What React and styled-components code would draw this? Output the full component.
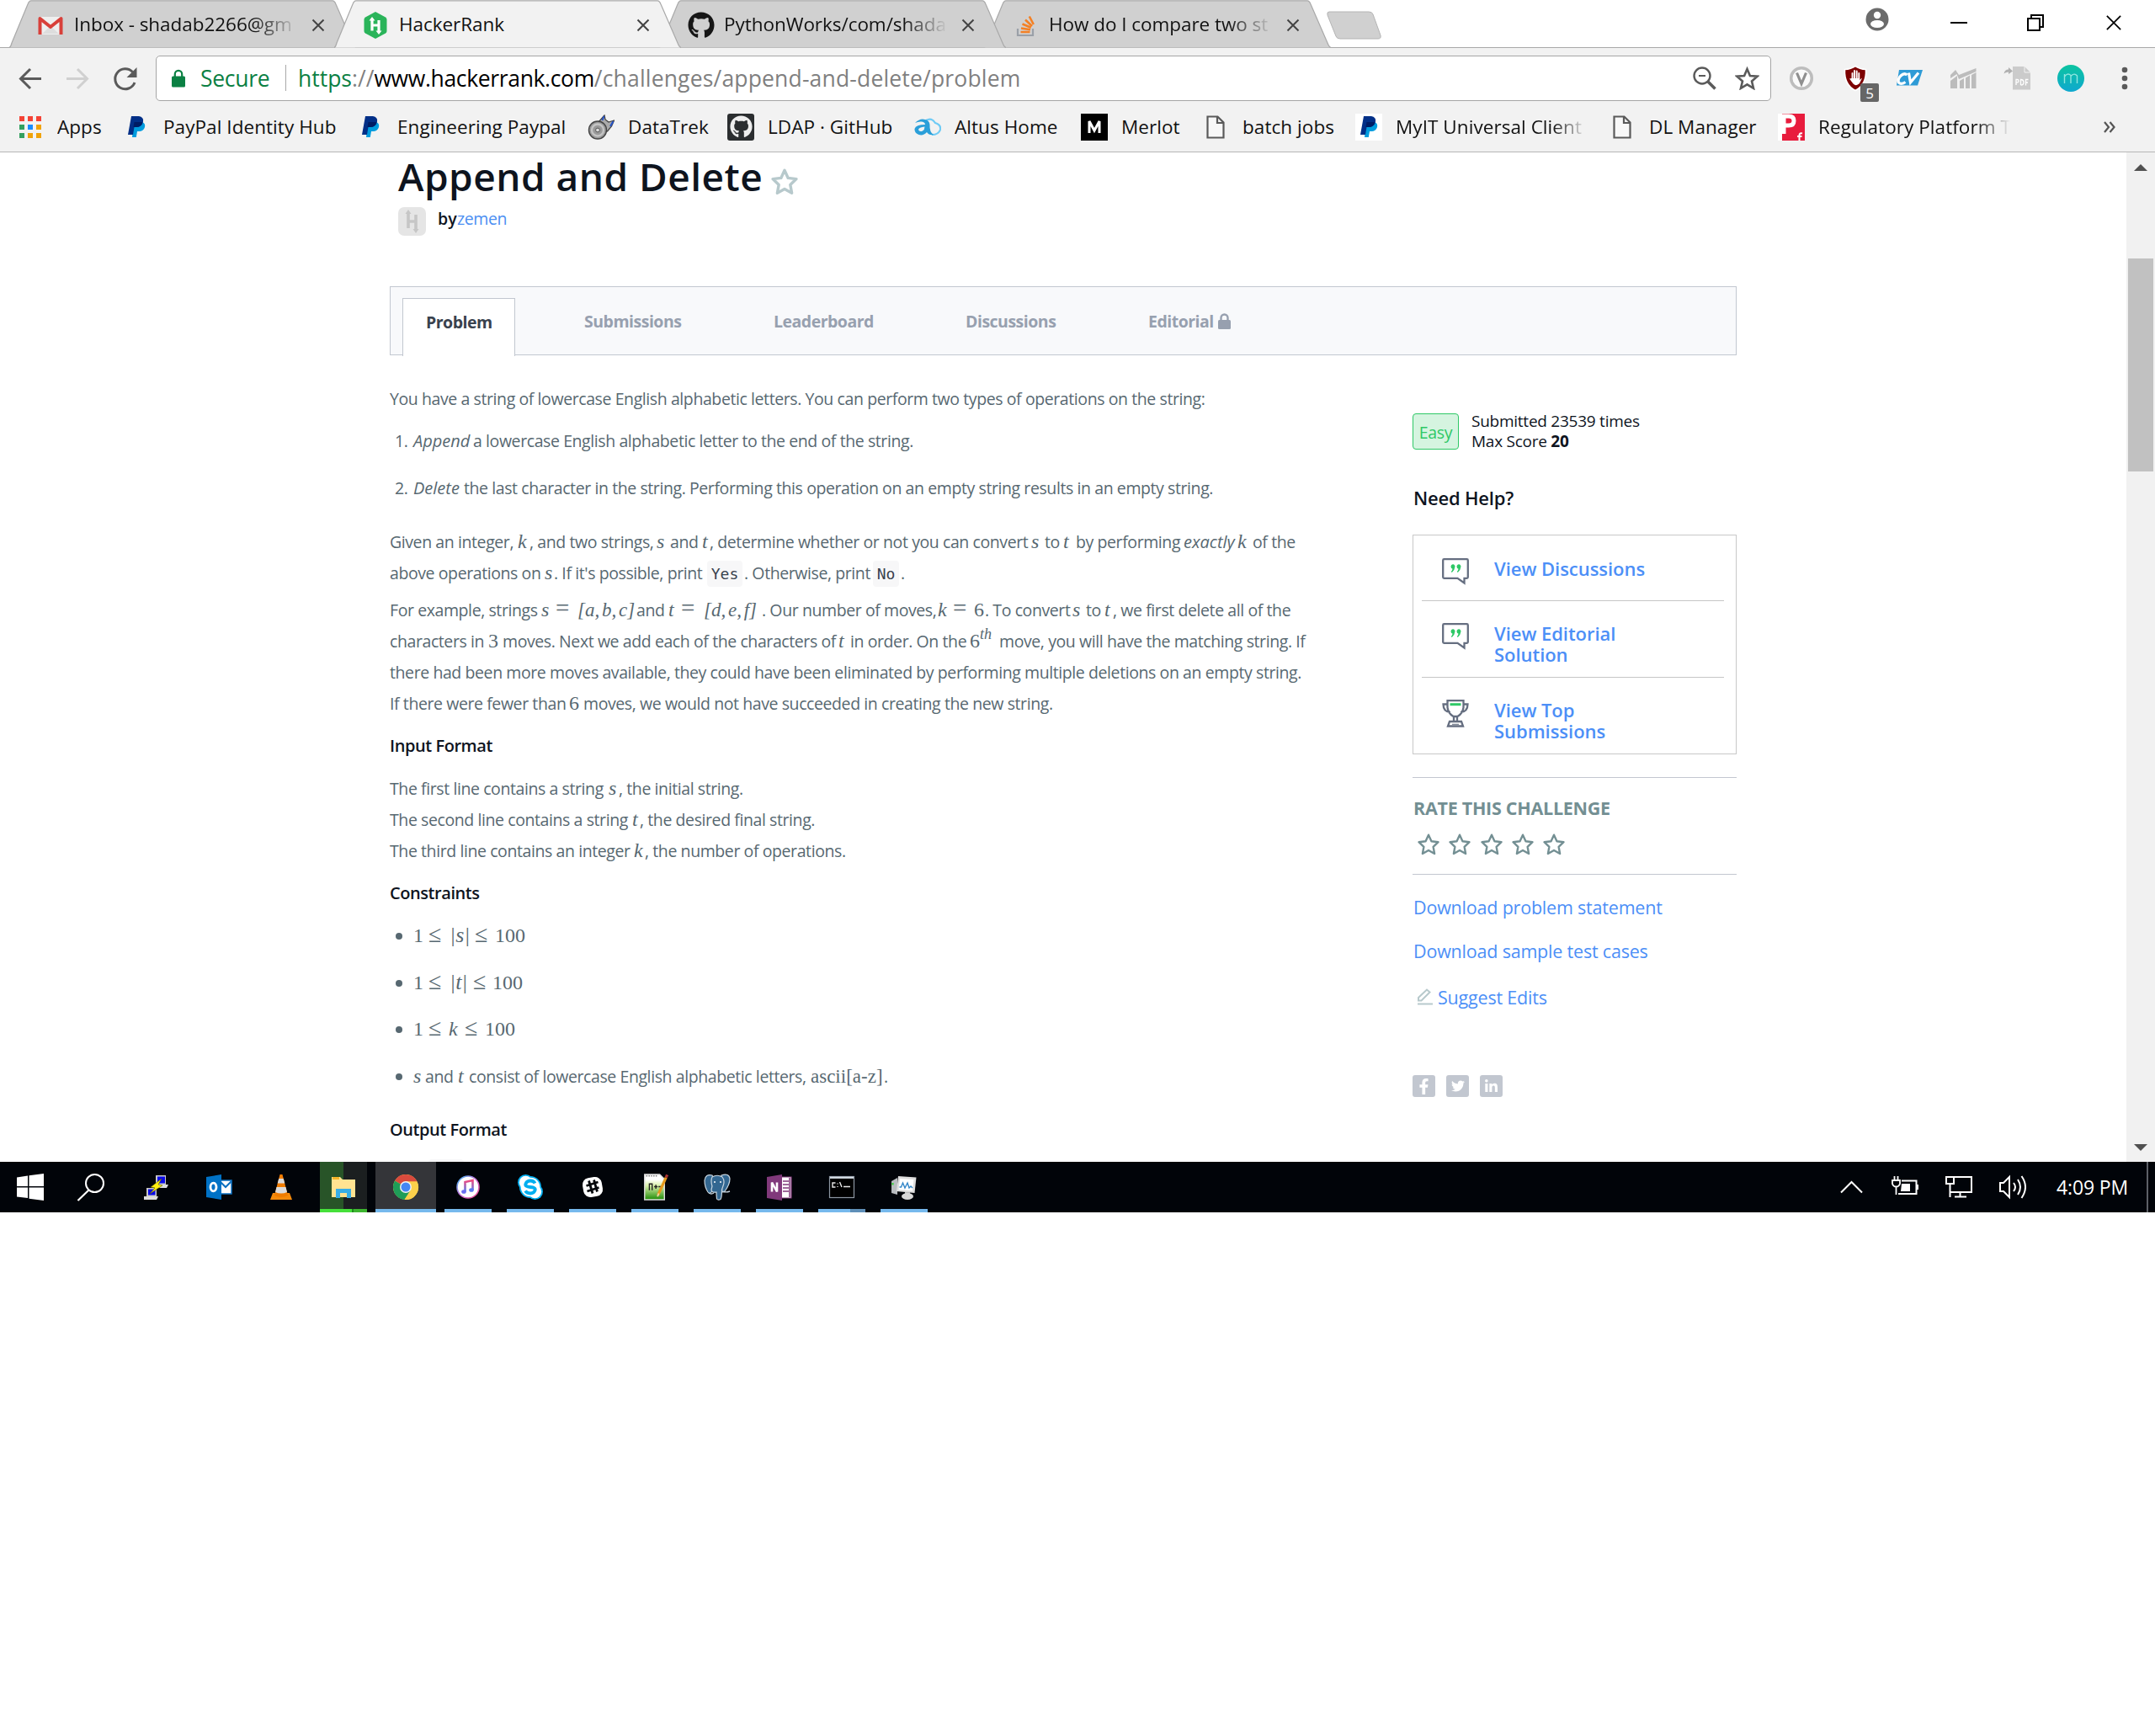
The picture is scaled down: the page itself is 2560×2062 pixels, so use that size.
import React from "react";
import styled, { createGlobalStyle, css } from "styled-components";
import { FaGithub, FaFacebookF, FaTwitter, FaLinkedinIn } from "react-icons/fa";

const GlobalStyle = createGlobalStyle`
  * { box-sizing: border-box; }
  body { margin: 0; background: #fff; font-family: "Open Sans", "Noto Sans", sans-serif; }
  svg { display: block; flex: none; }
`;

const Screen = styled.div`
  width: 2560px;
  height: 2062px;
  overflow: hidden;
  background: #fff;
`;

/* ---------- window and tab strip ---------- */

const TabStrip = styled.header`
  display: flex;
  height: 57px;
  padding-left: 11px;
  background: #fff;
  border-bottom: 1px solid #a9a9a9;
`;

const TabBox = styled.div`
  position: relative;
  z-index: ${(p) => p.$z};
  display: flex;
  align-items: center;
  width: 412px;
  height: 57px;
  margin-right: -26px;
  padding: 2px 0 0 34px;
  flex: none;
`;

const TabShape = styled.svg`
  position: absolute;
  left: 0;
  top: 0;
  z-index: -1;
`;

const TabIcon = styled.div`
  display: flex;
  width: 43px;
  padding-left: ${(p) => p.$pl || 0}px;
`;

const TabTitle = styled.div`
  width: 266px;
  height: 34px;
  line-height: 31px;
  font-size: 22.5px;
  letter-spacing: -0.05px;
  color: #111;
  white-space: nowrap;
  overflow: hidden;
  ${(p) => p.$fade && css`mask-image: linear-gradient(90deg, #000 80%, transparent 100%);`}
`;

const CloseSlot = styled.div`
  margin-left: 16px;
`;

const NewTab = styled.svg`
  margin: 13px 0 0 20px;
`;

const WindowButtons = styled.div`
  display: flex;
  align-items: flex-start;
  margin-left: auto;
  padding: 8px 39px 0 0;
`;

const WinSlot = styled.div`
  margin-left: ${(p) => p.$gap}px;
  padding-top: ${(p) => p.$top}px;
`;

/* ---------- toolbar ---------- */

const Toolbar = styled.div`
  display: flex;
  align-items: center;
  height: 71px;
  padding-left: 20px;
  background: #f2f2f2;
`;

const NavButton = styled.div`
  width: 32px;
  margin-right: 24px;
`;

const Omnibox = styled.div`
  display: flex;
  align-items: center;
  flex: none;
  width: 1919px;
  height: 54px;
  margin-left: -3px;
  padding: 0 13px 0 17px;
  background: #fff;
  border: 1px solid #a6a6a6;
  border-radius: 5px;
  font-size: 26.5px;
  white-space: pre;
`;

const Secure = styled.span`
  width: 84px;
  margin-left: 17px;
  letter-spacing: -0.3px;
  color: #0b8043;
`;

const OmniDivider = styled.span`
  width: 1px;
  height: 31px;
  margin: 0 14px 0 17px;
  background: #a8a8a8;
`;

const UrlPart = styled.span`
  color: ${(p) => p.$c};
  letter-spacing: ${(p) => p.$ls || 0}px;
`;

const OmniActions = styled.div`
  display: flex;
  gap: 22px;
  margin-left: auto;
`;

const Extensions = styled.div`
  display: flex;
  align-items: center;
  flex: none;
  gap: 32px;
  margin-left: 20px;
`;

const ExtSlot = styled.div`
  position: relative;
  width: 32px;
  height: 34px;
`;

const ExtBadge = styled.div`
  position: absolute;
  left: 22px;
  top: 23px;
  width: 22px;
  height: 22px;
  border-radius: 2px;
  background: #666;
  color: #fff;
  font-size: 17px;
  line-height: 24px;
  text-align: center;
`;

const MenuSlot = styled.div`
  margin-left: 38px;
`;

/* ---------- bookmarks ---------- */

const Bookmarks = styled.nav`
  display: flex;
  align-items: center;
  height: 53px;
  padding: 0 0 7px 20px;
  background: #f2f2f2;
  border-bottom: 1px solid #b6b6b6;
`;

const Bookmark = styled.div`
  display: flex;
  align-items: center;
  width: ${(p) => p.$w}px;
  flex: none;
`;

const BookmarkIcon = styled.div`
  display: flex;
  align-items: center;
  justify-content: center;
  flex: none;
  width: 32px;
  height: 32px;
  margin-right: 16px;
  border-radius: ${(p) => p.$r || 0}px;
  background: ${(p) => p.$bg || "transparent"};
`;

const BookmarkText = styled.div`
  width: ${(p) => (p.$fade ? p.$fade + "px" : "auto")};
  overflow: hidden;
  white-space: nowrap;
  font-size: 22.5px;
  line-height: 34px;
  letter-spacing: 0.06px;
  color: #111;
  ${(p) => p.$fade && css`mask-image: linear-gradient(90deg, #000 82%, transparent 100%);`}
`;

/* ---------- page ---------- */

const Viewport = styled.div`
  display: flex;
  height: 1199px;
  overflow: hidden;
`;

const Page = styled.main`
  width: 2526px;
  flex: none;
  padding: 0 463px;
`;

const TitleRow = styled.div`
  display: flex;
  align-items: flex-start;
  height: 65px;
  padding-left: 10px;
`;

const Title = styled.h1`
  width: 442px;
  margin: 0;
  font-size: 46px;
  font-weight: 600;
  line-height: 57px;
  letter-spacing: 0.5px;
  white-space: nowrap;
  color: #0e141e;
`;

const TitleStar = styled.div`
  padding-top: 18px;
`;

const Byline = styled.div`
  display: flex;
  align-items: center;
  height: 34px;
  padding-left: 10px;
  font-size: 19.5px;
  line-height: 30px;
  color: #0e141e;
`;

const Avatar = styled.div`
  width: 33px;
  height: 34px;
  margin-right: 14px;
  border-radius: 7px;
  background: #e5e5e5;
`;

const By = styled.span`
  width: 23px;
  margin-top: -6px;
  font-weight: 600;
`;

const Author = styled.a`
  margin-top: -6px;
  letter-spacing: -0.4px;
  color: #4c8ff2;
`;

const TabBar = styled.div`
  display: flex;
  width: 1600px;
  height: 82px;
  margin-top: 60px;
  padding: 13px 0 0 14px;
  border: 1px solid #c2c7d0;
  background: #f8f9fb;
`;

const PageTab = styled.div`
  display: flex;
  align-items: center;
  gap: 4px;
  width: ${(p) => p.$w}px;
  height: 68px;
  padding: 0 0 13px ${(p) => p.$pl || 0}px;
  font-size: 19.5px;
  font-weight: 700;
  letter-spacing: -0.5px;
  color: #97a0af;
  ${(p) => p.$active && css`
    height: 69px;
    color: #39424e;
    background: #fff;
    border: 1px solid #c2c7d0;
    border-bottom: 0;
  `}
`;

const Columns = styled.div`
  display: flex;
`;

const Body = styled.article`
  width: 1215px;
  flex: none;
  padding-top: 33px;
  font-size: 19.5px;
  line-height: 37px;
  letter-spacing: -0.41px;
  color: #576871;
`;

const Line = styled.div`
  height: 37px;
  margin-top: ${(p) => p.$mt || 0}px;
  padding-left: ${(p) => p.$pl || 0}px;
  white-space: nowrap;
`;

const Run = styled.span`
  display: inline-block;
  width: ${(p) => p.$w}px;
  white-space: pre;
  ${(p) => p.$it && css`
    font-size: 20px;
    font-style: italic;
    letter-spacing: 0;
  `}
`;

const Formula = styled.span`
  display: inline-block;
  width: ${(p) => p.$w}px;
  white-space: pre;
  font-family: "Liberation Serif", serif;
  font-style: ${(p) => (p.$up ? "normal" : "italic")};
  font-size: ${(p) => p.$s || 24}px;
  line-height: 1;
  letter-spacing: 0;
  word-spacing: ${(p) => p.$ws || 0}px;
  ${(p) => p.$sup && css`transform: translateY(-10px);`}
`;

const Code = styled.code`
  display: inline-block;
  width: ${(p) => p.$w}px;
  height: 31px;
  margin-right: 2px;
  line-height: 31px;
  border-radius: 4px;
  background: #f7f7f8;
  font-family: "DejaVu Sans Mono", monospace;
  font-size: 18px;
  letter-spacing: 0;
  text-align: center;
  color: #39424e;
`;

const ClippedCode = styled.div`
  width: 42px;
  height: 31px;
  margin: 17px 0 0 46px;
  border-radius: 4px;
  background: #f7f7f8;
`;

const Head = styled.div`
  height: 37px;
  margin-top: ${(p) => p.$mt || 13}px;
  font-size: 20px;
  font-weight: 600;
  letter-spacing: -0.44px;
  color: #0e141e;
`;

const Num = styled.span`
  display: inline-block;
  width: 22px;
`;

const Item = styled.div`
  display: flex;
  align-items: center;
  height: 37px;
  margin-top: ${(p) => p.$mt}px;
  padding-left: 7px;
  white-space: nowrap;
`;

const ItemText = styled.div`
  height: 37px;
`;

const Dot = styled.span`
  width: 8px;
  height: 8px;
  margin-right: 13px;
  border-radius: 50%;
  background: #576871;
`;

/* ---------- sidebar ---------- */

const Aside = styled.aside`
  width: 385px;
  flex: none;
  padding-top: 69px;
  color: #0e141e;
`;

const Stats = styled.div`
  display: flex;
  height: 44px;
`;

const Easy = styled.div`
  width: 55px;
  height: 43px;
  margin-right: 15px;
  border: 1px solid #2ec866;
  border-radius: 4px;
  background: #d5f4e0;
  color: #2ec866;
  font-size: 19.5px;
  line-height: 43px;
  letter-spacing: -0.3px;
  text-align: center;
`;

const StatText = styled.div`
  margin-top: -3px;
  font-size: 19px;
  line-height: 24px;
  letter-spacing: -0.25px;
  white-space: nowrap;
`;

const Need = styled.h2`
  height: 30px;
  margin: 41px 0 29px 1px;
  font-size: 22px;
  font-weight: 600;
  line-height: 30px;
  letter-spacing: -0.2px;
`;

const HelpBox = styled.div`
  width: 385px;
  height: 261px;
  border: 1px solid #c8c8c8;
  padding: 0 14px 0 10px;
`;

const HelpRow = styled.div`
  display: flex;
  height: ${(p) => p.$h}px;
  padding: ${(p) => p.$pt}px 0 0 24px;
  ${(p) => !p.$last && css`border-bottom: 1px solid #c6c6c6;`}
`;

const HelpText = styled.a`
  width: 200px;
  margin: 0 0 0 30px;
  font-size: 22px;
  font-weight: 600;
  line-height: 25px;
  letter-spacing: -0.04px;
  color: #4c8ff7;
`;

const Rate = styled.section`
  width: 385px;
  height: 116px;
  margin-top: 27px;
  padding-top: 21px;
  border-top: 1px solid #c3c6d0;
  border-bottom: 1px solid #c3c6d0;
`;

const RateTitle = styled.div`
  padding-left: 1px;
  font-size: 21.5px;
  font-weight: 700;
  line-height: 30px;
  letter-spacing: -0.27px;
  color: #738f93;
`;

const RateStars = styled.div`
  display: flex;
  gap: 9.3px;
  padding: 14px 0 0 5px;
`;

const SideLink = styled.a`
  display: flex;
  align-items: center;
  height: 30px;
  margin-top: ${(p) => p.$mt}px;
  padding-left: ${(p) => p.$pl || 1}px;
  font-size: 21.5px;
  letter-spacing: -0.2px;
  white-space: nowrap;
  color: #4c8ff7;
`;

const Social = styled.div`
  display: flex;
  gap: 13px;
  margin-top: 78px;
`;

const SocialBox = styled.div`
  display: flex;
  align-items: center;
  justify-content: center;
  width: 27px;
  height: 26px;
  border-radius: 3px;
  background: #c2c7d0;
`;

const Scrollbar = styled.div`
  display: flex;
  flex-direction: column;
  align-items: center;
  width: 34px;
  height: 1199px;
  background: #f1f1f1;
`;

const Thumb = styled.div`
  width: 30px;
  height: 253px;
  margin: 104px 0 799px;
  background: #c1c1c1;
`;

/* ---------- taskbar ---------- */

const Taskbar = styled.footer`
  display: flex;
  height: 60px;
  background: #010409;
`;

const StartSlot = styled.div`
  display: flex;
  align-items: center;
  justify-content: center;
  width: 72px;
  margin-right: ${(p) => p.$mr || 0}px;
`;

const TaskSlot = styled.div`
  display: flex;
  flex-direction: column;
  align-items: center;
  width: ${(p) => (p.$wide ? 72 : 56)}px;
  margin: ${(p) => (p.$wide ? "0 1px" : "0 9px")};
  padding-top: 14px;
  background: ${(p) => p.$bg || "transparent"};
`;

const TaskBarLine = styled.div`
  width: 100%;
  height: 4px;
  margin-top: 10px;
  background: ${(p) => p.$c};
`;

const Tray = styled.div`
  display: flex;
  align-items: center;
  margin-left: auto;
  color: #fff;
`;

const TrayIcon = styled.div`
  width: ${(p) => p.$w || 64}px;
`;

const Clock = styled.div`
  width: 107px;
  font-size: 23px;
  letter-spacing: -0.14px;
  white-space: nowrap;
`;

const Desk = styled.div`
  width: 10px;
  height: 60px;
  border-left: 2px solid #5d6066;
`;

/* ---------- icons ---------- */

const CloseX = ({ s = 16, w = 2, c = "#444" }) => (
  <svg width={s} height={s} viewBox="0 0 16 16">
    <path d="M1.5 1.5l13 13M14.5 1.5l-13 13" stroke={c} strokeWidth={w} />
  </svg>
);

const Gmail = () => (
  <svg width="30" height="22" viewBox="0 0 30 22">
    <rect x="2" y="1" width="26" height="21" rx="1.5" fill="#efefef" />
    <path d="M5 21L15 12l10 9z" fill="#ddd" />
    <path d="M2.5 22V3L15 13 27.500 3v19" fill="none" stroke="#d8403a" strokeWidth="4" strokeLinejoin="round" />
  </svg>
);

const HackerHex = () => (
  <svg width="30" height="34" viewBox="0 0 30 34">
    <path d="M15 1l12 6.500q1.500 1 1.500 2.500v14q0 1.500-1.500 2.500L15 33 3 26.500Q1.500 25.500 1.500 24V10Q1.500 8.500 3 7.500z" fill="#2ab45a" />
    <path d="M11 9v14.500M19 11v13M11 17h8" stroke="#fff" strokeWidth="3.200" fill="none" />
    <path d="M7.500 11.500L11 7l3.500 4.500zM15.500 23.500L19 28l3.500-4.500z" fill="#fff" />
  </svg>
);

const StackIcon = () => (
  <svg width="24" height="26" viewBox="0 0 24 26">
    <path d="M2 17v8h18v-8" fill="none" stroke="#9aa0a8" strokeWidth="2.200" />
    <path d="M5.500 21h11M6 16.500l11 1.800M7.500 11.500l10.300 4.200M11 6.500l8 7.500M15.800 2.500l5 9.500" stroke="#f48024" strokeWidth="2.600" />
  </svg>
);

const PaypalIcon = () => (
  <svg width="21" height="25" viewBox="0 0 21 25">
    <path d="M7 7h10q4 1.500 3 6-1.500 5-7 5h-2l-1.200 7H5z" fill="#009cde" />
    <path d="M4 0h9q6 1 5 6.500Q17 13 10 13H7.500L6 22H0z" fill="#012f87" />
    <path d="M7.500 7h9.800Q16 13 10 13H6.500z" fill="#001c64" />
  </svg>
);

const FileIcon = () => (
  <svg width="22" height="28" viewBox="0 0 22 28">
    <path d="M1.500 1.500h12l7 7v18h-19zM13 2v7h7" fill="#f8f8f8" stroke="#5a5a5a" strokeWidth="2.200" />
  </svg>
);

const MerlotIcon = () => (
  <svg width="32" height="32" viewBox="0 0 32 32">
    <path d="M10 23V9l6 11 6-11v14" fill="none" stroke="#fff" strokeWidth="3" />
  </svg>
);

const PlatformIcon = () => (
  <svg width="32" height="32" viewBox="0 0 32 32">
    <path d="M0 0h32v32H0z" fill="#e81c3d" />
    <path d="M0 0h5v32H0z" fill="#fff" />
    <path d="M7 24V3h6q6 0 6 5.500T13 14H8" fill="none" stroke="#fff" strokeWidth="5" />
    <path d="M29 23.500q-3.500-1-3.500 2.500v6M23 27h5.500" fill="none" stroke="#fff" strokeWidth="2" />
  </svg>
);

const StarOutline = ({ s, c, w = 2.4 }) => (
  <svg width={s} height={s} viewBox="0 0 26 26">
    <path d="M13 2.500l3.200 7 7.500.9-5.500 5.200 1.400 7.600L13 19.500l-6.600 3.700 1.400-7.600L2.300 10.400l7.500-.9z" fill="none" stroke={c} strokeWidth={w} strokeLinejoin="round" />
  </svg>
);

const Discuss = () => (
  <svg width="32" height="32" viewBox="0 0 32 32">
    <path d="M2.500 1.200h27q1.300 0 1.300 1.300v20q0 1.300-1.300 1.300H26.500v5.700L18.500 23.800H2.500q-1.300 0-1.300-1.300v-20q0-1.300 1.300-1.300z" fill="none" stroke="#656e80" strokeWidth="2.300" />
    <path d="M10.500 10a2.500 2.500 0 1 1 4.800.8q-.4 4-3.500 6.200l-1-1q1.500-1.500 1.700-3.200-2-.6-2-2.800zM17.500 10a2.500 2.500 0 1 1 4.800.8q-.4 4-3.500 6.200l-1-1q1.500-1.500 1.700-3.200-2-.6-2-2.800z" fill="#2ec866" />
  </svg>
);

const Trophy = () => (
  <svg width="32" height="33" viewBox="0 0 32 33">
    <path d="M6.500 1.200h19v8.300q-1 7-7 10.500h-5q-6-3.500-7-10.500zM6.500 5.500h-5q0 9 8.500 9.500M25.500 5.500h5q0 9-8.500 9.500M14 20v6M18 20v6M9 26h14l2 5.500H7z" fill="none" stroke="#656e80" strokeWidth="2.300" />
    <path d="M9.500 5.700h13" stroke="#2ec866" strokeWidth="3" />
    <path d="M12 29.300h8" stroke="#656e80" strokeWidth="1" />
  </svg>
);

const AppsIcon = () => (
  <svg width="26" height="26" viewBox="0 0 26 26">
    {["#f44336", "#f44336", "#f44336", "#34a060", "#1a8cff", "#f0a30a", "#34a060", "#f0a30a", "#f0a30a"].map((c, i) => (
      <rect key={i} x={(i % 3) * 10} y={Math.floor(i / 3) * 10} width="6" height="6" fill={c} />
    ))}
  </svg>
);

const Viking = () => (
  <svg width="32" height="30" viewBox="0 0 32 30">
    <path d="M13 9L20 1l1 5 4 3 6.500-2-3 7-5 6-6-2z" fill="#aaa" stroke="#444" strokeWidth="1.300" />
    <path d="M19.500 2l-2 5M30.500 8l-3.500 6" stroke="#2452c8" strokeWidth="2" />
    <circle cx="12" cy="18.500" r="10.500" fill="#999" stroke="#444" strokeWidth="1.400" />
    <circle cx="12" cy="18.500" r="7" fill="none" stroke="#c4c4c4" strokeWidth="2.400" />
    <circle cx="12" cy="18.500" r="2.400" fill="#ddd" stroke="#555" />
  </svg>
);

const Cloud = () => (
  <svg width="32" height="22" viewBox="0 0 32 22">
    <path d="M14 3q7-4 11 3 7 2 6 8-2 6-10 6" fill="none" stroke="#6fcbf5" strokeWidth="2.200" />
    <path d="M1 6Q7 0 13 2q5 1 5.500 6-.5 9 4.500 12-5 1-8-3-4 4.500-9.500 3Q0 18 .500 13 2 8 13 8q0-3-4-3.500T1 6z" fill="#2b9fd9" />
    <path d="M12.500 10.500q-7 .5-7.500 3.500 1 3 5 1.500 2.500-1.500 2.500-5z" fill="#f2f2f2" />
  </svg>
);

const Putty = () => (
  <svg width="32" height="32" viewBox="0 0 32 32">
    <path d="M15 2h12v11H15zM4 17h12v10H4z" fill="#c8c8c8" />
    <path d="M17 3.500h9v8h-9zM6 18.500h8.500v7H6z" fill="#0808e8" />
    <path d="M18 13h12l-2 4H17zM1 27h17l-2 4H1z" fill="#ddd" />
    <path d="M22 6L9 16l5 1-6 7 15-10-5-1z" fill="#ffee10" stroke="#555500" strokeWidth=".6" />
  </svg>
);

const Outlook = () => (
  <svg width="32" height="32" viewBox="0 0 32 32">
    <path d="M18 8h13v16H18z" fill="#fff" stroke="#0b6fc0" strokeWidth="1.500" />
    <path d="M18 10l6 6 7-7" fill="none" stroke="#0b6fc0" strokeWidth="2" />
    <path d="M1 4l18-3v30L1 28z" fill="#0072c6" />
    <ellipse cx="9.500" cy="16" rx="3.500" ry="4.800" fill="none" stroke="#fff" strokeWidth="2.800" />
  </svg>
);

const Vlc = () => (
  <svg width="32" height="32" viewBox="0 0 32 32">
    <path d="M6 23h20l3 8H3z" fill="#f58a0b" />
    <path d="M14.500 1h3L24 26q-8 4-16 0z" fill="#f07c00" />
    <path d="M13.200 6h5.600l1.500 5.500h-8.600zM10.500 16h11l1.500 6q-7 3-14 0z" fill="#dcdcdc" />
  </svg>
);

const Explorer = () => (
  <svg width="32" height="32" viewBox="0 0 32 32">
    <path d="M2 4h10l3 3h15v21H2z" fill="#ffe391" />
    <path d="M3 4h8v3H3z" fill="#f5b62a" />
    <path d="M7 29V18h18v11h-5v-6h-8v6z" fill="#38aee6" />
  </svg>
);

const ChromeIcon = () => (
  <svg width="32" height="32" viewBox="0 0 32 32">
    <circle cx="16" cy="16" r="15" fill="#fcd04b" />
    <path d="M16 16L3 8.500A15 15 0 0 1 29.500 9.500H16z" fill="#d94a3d" />
    <path d="M16 16L3 8.500A15 15 0 0 0 14.500 31L22 19.500z" fill="#1f9d58" />
    <path d="M16 9.500h13.500A15 15 0 0 1 14.500 31L22 19.500z" fill="#fcd04b" />
    <circle cx="16" cy="16" r="7" fill="#f2f2f2" />
    <circle cx="16" cy="16" r="5.500" fill="#4587f3" />
  </svg>
);

const Itunes = () => (
  <svg width="32" height="32" viewBox="0 0 32 32">
    <defs>
      <linearGradient id="ring" x1="0" y1="0" x2="1" y2="1"><stop offset="0" stopColor="#35b7f0" /><stop offset=".5" stopColor="#c86dd8" /><stop offset="1" stopColor="#f0508c" /></linearGradient>
      <linearGradient id="note" x1="0" y1="0" x2="0" y2="1"><stop offset="0" stopColor="#f2497f" /><stop offset="1" stopColor="#4f7df0" /></linearGradient>
    </defs>
    <circle cx="16" cy="16" r="13" fill="#fff" stroke="url(#ring)" strokeWidth="1.600" />
    <path d="M12.500 21.500V10l9-2V19.500" fill="none" stroke="url(#note)" strokeWidth="2.600" />
    <ellipse cx="11" cy="21.500" rx="2.800" ry="2.300" fill="#6a6ef0" />
    <ellipse cx="20" cy="19.500" rx="2.800" ry="2.300" fill="#5a78f0" />
  </svg>
);

const Skype = () => (
  <svg width="32" height="32" viewBox="0 0 32 32">
    <circle cx="10.500" cy="10.500" r="9.500" fill="#00aff0" /><circle cx="21.500" cy="21.500" r="9.500" fill="#00aff0" /><circle cx="16" cy="16" r="13" fill="#00aff0" />
    <circle cx="16" cy="16" r="11.300" fill="#fff" /><circle cx="10.500" cy="10.500" r="7.700" fill="#fff" /><circle cx="21.500" cy="21.500" r="7.700" fill="#fff" />
    <path d="M21.500 11.500Q20 8.500 16 8.500T10.500 12t5.500 4 5.500 4-5.500 3.500-6-3" fill="none" stroke="#00aff0" strokeWidth="3.800" />
  </svg>
);

const Slack = () => (
  <svg width="32" height="32" viewBox="0 0 32 32">
    <rect x="4.500" y="4.500" width="23" height="23" rx="8" fill="#fff" transform="rotate(-10 16 16)" />
    <path d="M11.500 8.500l4.500 15M17.500 7.500l4 14M8.500 14.500l14-4.500M9.500 21l14-4.500" stroke="#05080c" strokeWidth="2.800" />
  </svg>
);

const Npp = () => (
  <svg width="32" height="32" viewBox="0 0 32 34">
    <defs><linearGradient id="page" x1="0" y1="0" x2="0" y2="1"><stop offset=".2" stopColor="#fff" /><stop offset=".45" stopColor="#d8f0a8" /><stop offset=".95" stopColor="#2f9414" /></linearGradient></defs>
    <path d="M3 1h19l6 6v26H3z" fill="url(#page)" stroke="#ddd" strokeWidth="1.500" />
    <path d="M5 3h15" stroke="#777" strokeDasharray="1.500 1.500" strokeWidth="1.500" />
    <path d="M9 21v-8h3.500v8M15 16.500h4.500M17.200 14v5M20.500 16.500h4" fill="none" stroke="#222" strokeWidth="1.500" />
    <path d="M30 5L20 27" stroke="#e69a1c" strokeWidth="3.400" />
    <path d="M31.500 1.500L30 5" stroke="#a33" strokeWidth="3.400" />
    <path d="M20.800 25l-1.500 4" stroke="#efd3a0" strokeWidth="2" />
  </svg>
);

const Elephant = () => (
  <svg width="32" height="32" viewBox="0 0 32 32">
    <path d="M10 2Q2 0 1 8q0 8 4 14 2 2.500 4 0l2-3 1-13z" fill="#336791" stroke="#c9d6e0" strokeWidth="1.200" />
    <path d="M21 2q9-3 10 4 0 7-6 15l-3 1-2-15z" fill="#336791" stroke="#c9d6e0" strokeWidth="1.200" />
    <path d="M10 4q6-3.500 12 0 3 4 1.500 9L21.500 19q0 9-1.500 11.500-3 1.500-4.500-.5-.5-5-.5-8-6 1-6-3l1-4q-2-7 0-11z" fill="#336791" stroke="#c9d6e0" strokeWidth="1.200" />
    <path d="M23 21.500q4 1 8-.5M12 23q-3 2-6 0" fill="none" stroke="#c9d6e0" strokeWidth="1.400" />
    <path d="M12 10h2M19 10h2" stroke="#fff" strokeWidth="1.600" />
  </svg>
);

const OneNote = () => (
  <svg width="32" height="32" viewBox="0 0 32 32">
    <path d="M17 4h13v25H17z" fill="#fff" stroke="#80397b" strokeWidth="1.200" />
    <path d="M20 9h7M20 13h7M20 17h7M20 21h7M28 5v23" stroke="#80397b" strokeWidth="1.500" />
    <path d="M1 4l18-3v31L1 29z" fill="#80397b" />
    <path d="M7 21.500v-11l6 11v-11" fill="none" stroke="#fff" strokeWidth="2.600" />
  </svg>
);

const Cmd = () => (
  <svg width="32" height="32" viewBox="0 0 32 32">
    <rect x="1.500" y="3.500" width="29" height="25" fill="#000" stroke="#8d97a2" strokeWidth="1.200" />
    <path d="M2 4.800h28" stroke="#d5dde6" strokeWidth="2.200" />
    <path d="M8.500 11H5v5h3.500M11 11.500v1M11 15v1M13.500 10l2.500 6M18 15.500h8" fill="none" stroke="#e8e8e8" strokeWidth="1.400" />
  </svg>
);

const Monitor = () => (
  <svg width="32" height="32" viewBox="0 0 32 32">
    <path d="M1 9l7-4v20l-7-2z" fill="#b9bdc0" />
    <path d="M9 3l21.500 1.500L28.500 23 7 21z" fill="#dedede" />
    <path d="M11 6l16.500 1-1.500 13.500L9.500 19z" fill="#fff" />
    <path d="M10.500 16h2l2-5 2.500 6 3-6 2 6 2-2 2 2" fill="none" stroke="#3286c8" strokeWidth="1.400" />
    <path d="M17 22h6v4h-6z" fill="#bbb" />
    <ellipse cx="20" cy="27" rx="7" ry="4" fill="#d8d8d8" />
    <path d="M2.500 11v2.500" stroke="#3c3" strokeWidth="2" />
  </svg>
);

const BLUE = "#76b9ed";

const tasks = [
  { icon: <Putty /> },
  { icon: <Outlook /> },
  { icon: <Vlc /> },
  { icon: <Explorer />, line: "linear-gradient(90deg,#45e03a 0 38px,#1f8a1c 38px 40px,#3db52f 40px)", bg: "linear-gradient(90deg,#285428 0 50%,#1b1f20 50%)" },
  { icon: <ChromeIcon />, line: BLUE, bg: "#343539", wide: true },
  { icon: <Itunes />, line: BLUE },
  { icon: <Skype />, line: BLUE },
  { icon: <Slack />, line: BLUE },
  { icon: <Npp />, line: BLUE },
  { icon: <Elephant />, line: BLUE },
  { icon: <OneNote />, line: BLUE },
  { icon: <Cmd />, line: "linear-gradient(90deg,#76b9ed 0 38px,#5f8fb8 38px)" },
  { icon: <Monitor />, line: BLUE },
];

const tabs = [
  { icon: <Gmail />, title: "Inbox - shadab2266@gm", fade: true, z: 1 },
  { icon: <HackerHex />, title: "HackerRank", active: true, z: 5 },
  { icon: <FaGithub size={32} color="#161616" />, title: "PythonWorks/com/shada", fade: true, z: 3 },
  { icon: <StackIcon />, title: "How do I compare two st", fade: true, z: 2, pl: 4 },
];

const bookmarks = [
  { w: 126, icon: <AppsIcon />, text: "Apps" },
  { w: 278, icon: <PaypalIcon />, text: "PayPal Identity Hub" },
  { w: 274, icon: <PaypalIcon />, text: "Engineering Paypal" },
  { w: 166, icon: <Viking />, text: "DataTrek" },
  { w: 222, icon: <FaGithub size={27} color="#eee" />, text: "LDAP · GitHub", bg: "#2b2e30", r: 3 },
  { w: 198, icon: <Cloud />, text: "Altus Home" },
  { w: 144, icon: <MerlotIcon />, text: "Merlot", bg: "#000" },
  { w: 182, icon: <FileIcon />, text: "batch jobs" },
  { w: 301, icon: <PaypalIcon />, text: "MyIT Universal Client", bg: "#fff", fade: 227 },
  { w: 201, icon: <FileIcon />, text: "DL Manager" },
  { w: 387, icon: <PlatformIcon />, text: "Regulatory Platform T", fade: 228 },
];

export default function App() {
  return (
    <Screen>
      <GlobalStyle />
      <TabStrip>
        {tabs.map((t) => (
          <TabBox key={t.title} $z={t.z}>
            <TabShape width="412" height="57" viewBox="0 0 412 57">
              <path d="M0 56.500C1.500 56 2 55 3 51L22 5Q23.500 .8 26 .8H384Q386.500 .8 388 5L408 51C409.500 55 410 56 412 56.500z" fill={t.active ? "#f2f2f2" : "#d0d0d0"} />
              <path d="M0 56.500C1.500 56 2 55 3 51L22 5Q23.500 .8 26 .8H384Q386.500 .8 388 5L408 51C409.500 55 410 56 412 56.500" fill="none" stroke="#a9a9a9" strokeWidth="1.200" />
            </TabShape>
            <TabIcon $pl={t.pl}>{t.icon}</TabIcon>
            <TabTitle $fade={t.fade}>{t.title}</TabTitle>
            <CloseSlot><CloseX /></CloseSlot>
          </TabBox>
        ))}
        <NewTab width="68" height="34" viewBox="0 0 68 34">
          <path d="M4 1h47q4 0 5 3l9 25q1 4-3 4H17q-4 0-5-3L2 5Q1 1 4 1z" fill="#d0d0d0" stroke="#b4b4b4" />
        </NewTab>
        <WindowButtons>
          <WinSlot $gap={0} $top={1}>
            <svg width="28" height="28" viewBox="0 0 28 28">
              <circle cx="14" cy="14" r="13.500" fill="#6b6b6b" /><circle cx="14" cy="9" r="4.200" fill="#fff" /><ellipse cx="14" cy="19.500" rx="8" ry="4.500" fill="#fff" />
            </svg>
          </WinSlot>
          <WinSlot $gap={73} $top={18}><svg width="20" height="2"><rect width="20" height="2" fill="#000" /></svg></WinSlot>
          <WinSlot $gap={71} $top={9}>
            <svg width="20" height="20" viewBox="0 0 20 20"><path d="M1 5h14v14H1zM5 5V1h14v14h-4" fill="none" stroke="#000" strokeWidth="2" /></svg>
          </WinSlot>
          <WinSlot $gap={73} $top={9}><CloseX s={20} w={1.4} c="#000" /></WinSlot>
        </WindowButtons>
      </TabStrip>

      <Toolbar>
        <NavButton><svg width="32" height="32" viewBox="0 0 32 32"><path d="M29 16.500H5M16 5L4.500 16.500 16 28" fill="none" stroke="#5a5a5a" strokeWidth="3" /></svg></NavButton>
        <NavButton><svg width="32" height="32" viewBox="0 0 32 32"><path d="M3 16.500h24M16 5l11.500 11.500L16 28" fill="none" stroke="#d0d0d0" strokeWidth="3" /></svg></NavButton>
        <NavButton><svg width="32" height="32" viewBox="0 0 32 32"><path d="M28 21A12 12 0 1 1 25.500 8.500" fill="none" stroke="#5a5a5a" strokeWidth="3" /><path d="M30.500 3v12h-12z" fill="#5a5a5a" /></svg></NavButton>
        <Omnibox>
          <svg width="18" height="22" viewBox="0 0 18 22"><rect x="1" y="8.500" width="16" height="13" rx="1.500" fill="#0b8043" /><path d="M4.800 9V6a4.200 4.200 0 0 1 8.400 0v3" fill="none" stroke="#0b8043" strokeWidth="2.200" /></svg>
          <Secure>Secure</Secure>
          <OmniDivider />
          <UrlPart $c="#0b8043">https</UrlPart>
          <UrlPart $c="#808080">://</UrlPart>
          <UrlPart $c="#000" $ls={-0.35}>www.hackerrank.com</UrlPart>
          <UrlPart $c="#808080" $ls={0.17}>/challenges/append-and-delete/problem</UrlPart>
          <OmniActions>
            <svg width="28" height="28" viewBox="0 0 28 28"><circle cx="11" cy="11" r="9.500" fill="none" stroke="#5a5a5a" strokeWidth="2.400" /><path d="M18 18l8.500 8.500" stroke="#5a5a5a" strokeWidth="3.600" /><path d="M7 11h8" stroke="#5a5a5a" strokeWidth="2" /></svg>
            <svg width="29" height="28" viewBox="0 0 29 28"><path d="M14.500 3l3.400 8 8.600.7-6.500 5.700 2 8.400-7.500-4.500L7 25.800l2-8.400-6.500-5.700 8.600-.7z" fill="none" stroke="#5a5a5a" strokeWidth="2.600" /></svg>
          </OmniActions>
        </Omnibox>
        <Extensions>
          <ExtSlot><svg width="32" height="34" viewBox="0 0 32 34"><circle cx="16" cy="17" r="12.300" fill="#fafafa" stroke="#bdbdbd" strokeWidth="3.500" /><path d="M10.500 10.500l5.500 13 5.500-13" fill="none" stroke="#8f8f8f" strokeWidth="3.200" /></svg></ExtSlot>
          <ExtSlot>
            <svg width="32" height="34" viewBox="0 0 32 34"><path d="M16 2.500q5 3.500 12.500 4 1 18-12.500 25Q2.500 24.500 3.500 6.500q7.500-.5 12.500-4z" fill="#7d0000" stroke="#fff" strokeWidth="1.600" /><path d="M12.500 18v-7M15 17V8M17.700 17V8.500M20.300 18v-7" stroke="#fff" strokeWidth="1.900" strokeLinecap="round" /><path d="M11.500 17h9.700v2l3-2.500-3.200 6.500q-4 4-7.500.5L9 17.500z" fill="#fff" /></svg>
            <ExtBadge>5</ExtBadge>
          </ExtSlot>
          <ExtSlot><svg width="32" height="34" viewBox="0 0 32 34"><path d="M4 7h28l-6 18.500H1z" fill="#2e9bd6" /><path d="M13.500 13q-3.500-3-7.500 1t-2.500 8q2.500 3 8-.5M15.500 10.500l2 11.500L27 10.500" fill="none" stroke="#fff" strokeWidth="3.200" /></svg></ExtSlot>
          <ExtSlot><svg width="32" height="34" viewBox="0 0 32 34"><path d="M1 29v-9l8-6v15zM12 29V20l5-3v12zM19 29V16.500l5-3V29zM26 29V13l5.500-3v19z" fill="#bcbcbc" /><path d="M1 17V13l6-6 4 6L31.500 5v4L11 18 8.500 12z" fill="#bcbcbc" /></svg></ExtSlot>
          <ExtSlot><svg width="32" height="34" viewBox="0 0 32 34"><path d="M11 3h14l7 7v20.500H11z" fill="#cbcbcb" /><path d="M25 3v7h7" fill="none" stroke="#f2f2f2" /><path d="M.5 11.500q1-5 5.500-5V4l5 4.500L6 12V9.500q-4 .5-5.500 2z" fill="#b0b0b0" /><path d="M15 25v-6.500h1.500q1.500 0 1.500 1.700t-1.500 1.700H15M20.500 25v-6.500q3.500 0 3.500 3.200T20.500 25M26.500 25.500v-7h3M26.500 22h2.500" fill="none" stroke="#fff" strokeWidth="1.300" /></svg></ExtSlot>
          <ExtSlot><svg width="32" height="34" viewBox="0 0 32 34"><defs><linearGradient id="avatar" x1="0" y1="0" x2="0" y2="1"><stop offset="0" stopColor="#0cc4a0" /><stop offset="1" stopColor="#0fa8cf" /></linearGradient></defs><circle cx="16" cy="17" r="16" fill="url(#avatar)" /><path d="M8.500 23V12M8.500 15q3.500-5 7.500-1.500V23M16 14.500q4-4.500 7.500-.5v9" fill="none" stroke="#8fe6df" strokeWidth="1.400" /></svg></ExtSlot>
        </Extensions>
        <MenuSlot>
          <svg width="20" height="28" viewBox="0 0 20 28"><circle cx="10" cy="4" r="3.300" fill="#5a5a5a" /><circle cx="10" cy="14" r="3.300" fill="#5a5a5a" /><circle cx="10" cy="24" r="3.300" fill="#5a5a5a" /></svg>
        </MenuSlot>
      </Toolbar>

      <Bookmarks>
        {bookmarks.map((b) => (
          <Bookmark key={b.text} $w={b.w}>
            <BookmarkIcon $bg={b.bg} $r={b.r}>{b.icon}</BookmarkIcon>
            <BookmarkText $fade={b.fade}>{b.text}</BookmarkText>
          </Bookmark>
        ))}
        <svg width="14" height="14" viewBox="0 0 14 14"><path d="M1 1l5 6-5 6M7.500 1l5 6-5 6" fill="none" stroke="#555" strokeWidth="2.200" /></svg>
      </Bookmarks>

      <Viewport>
        <Page>
          <TitleRow>
            <Title>Append and Delete</Title>
            <TitleStar><StarOutline s={34} c="#b7c9cc" w={2.6} /></TitleStar>
          </TitleRow>
          <Byline>
            <Avatar><svg width="33" height="34" viewBox="0 0 33 34"><path d="M12 7v18M21 9v18M12 17h9" stroke="#c6c6c6" strokeWidth="3.600" /><path d="M8.500 8L12 3l3.500 5zM17.500 26l3.500 5 3.500-5z" fill="#c6c6c6" /></svg></Avatar>
            <By>by</By><Author>zemen</Author>
          </Byline>
          <TabBar>
            <PageTab $active $w={134} $pl={27}>Problem</PageTab>
            <PageTab $w={307} $pl={82}>Submissions</PageTab>
            <PageTab $w={228}>Leaderboard</PageTab>
            <PageTab $w={217}>Discussions</PageTab>
            <PageTab $w={200}>
              Editorial
              <svg width="17" height="20" viewBox="0 0 17 20"><rect x="1" y="8" width="15" height="11" rx="1.500" fill="#97a0af" /><path d="M4.500 9V5.500a4 4 0 0 1 8 0V9" fill="none" stroke="#97a0af" strokeWidth="2.400" /></svg>
            </PageTab>
          </TabBar>
          <Columns>
            <Body>
              <Line>You have a string of lowercase English alphabetic letters. You can perform two types of operations on the string:</Line>
              <Line $mt={13} $pl={6}><Num>1.</Num><Run $it $w={71}>Append</Run>a lowercase English alphabetic letter to the end of the string.</Line>
              <Line $mt={19} $pl={6}><Num>2.</Num><Run $it $w={60}>Delete</Run>the last character in the string. Performing this operation on an empty string results in an empty string.</Line>
              <Line $mt={27}>
                <Run $w={152}>Given an integer,</Run><Formula $w={14}>k</Formula><Run $w={151}>, and two strings,</Run><Formula $w={16}>s</Formula><Run $w={38}>and</Run><Formula $w={9}>t</Formula><Run $w={382}>, determine whether or not you can convert</Run><Formula $w={16}>s</Formula><Run $w={22}>to</Run><Formula $w={15}>t</Formula><Run $w={128}>by performing</Run><Run $it $w={64}>exactly</Run><Formula $w={18}>k</Formula>of the
              </Line>
              <Line>
                <Run $w={184}>above operations on</Run><Formula $w={11}>s</Formula><Run $w={182}>. If it's possible, print</Run><Code $w={42}>Yes</Code><Run $w={153}>. Otherwise, print</Run><Code $w={31}>No</Code>.
              </Line>
              <Line $mt={7}>
                <Run $w={180}>For example, strings</Run><Formula $w={17}>s</Formula><Formula $up $s={29} $w={26}>=</Formula><Formula $s={23} $ws={-3} $w={70}>[a, b, c]</Formula><Run $w={38}>and</Run><Formula $w={15}>t</Formula><Formula $up $s={29} $w={27}>=</Formula><Formula $s={23} $ws={-3} $w={69}>[d, e, f]</Formula><Run $w={209}>. Our number of moves,</Run><Formula $w={18}>k</Formula><Formula $up $s={29} $w={25}>=</Formula><Formula $up $w={13}>6</Formula><Run $w={104}>. To convert</Run><Formula $w={16}>s</Formula><Run $w={22}>to</Run><Formula $w={10}>t</Formula>, we first delete all of the
              </Line>
              <Line>
                <Run $w={117}>characters in</Run><Formula $up $w={17}>3</Formula><Run $w={399}>moves. Next we add each of the characters of</Run><Formula $w={14}>t</Formula><Run $w={142}>in order. On the</Run><Formula $up $w={12}>6</Formula><Formula $sup $s={18} $w={23}>th</Formula>move, you will have the matching string. If
              </Line>
              <Line>there had been more moves available, they could have been eliminated by performing multiple deletions on an empty string.</Line>
              <Line><Run $w={213}>If there were fewer than</Run><Formula $up $w={17}>6</Formula>moves, we would not have succeeded in creating the new string.</Line>
              <Head>Input Format</Head>
              <Line $mt={14}><Run $w={260}>The first line contains a string</Run><Formula $w={12}>s</Formula>, the initial string.</Line>
              <Line><Run $w={288}>The second line contains a string</Run><Formula $w={9}>t</Formula>, the desired final string.</Line>
              <Line><Run $w={290}>The third line contains an integer</Run><Formula $w={13}>k</Formula>, the number of operations.</Line>
              <Head>Constraints</Head>
              <Item $mt={14}><Dot /><ItemText><Formula $up $w={18}>1</Formula><Formula $up $s={28} $w={25}>≤</Formula><Formula $s={26} $w={30}>|s|</Formula><Formula $up $s={28} $w={24}>≤</Formula><Formula $up $w={40}>100</Formula></ItemText></Item>
              <Item $mt={19}><Dot /><ItemText><Formula $up $w={18}>1</Formula><Formula $up $s={28} $w={25}>≤</Formula><Formula $s={26} $w={28}>|t|</Formula><Formula $up $s={28} $w={23}>≤</Formula><Formula $up $w={40}>100</Formula></ItemText></Item>
              <Item $mt={18}><Dot /><ItemText><Formula $up $w={18}>1</Formula><Formula $up $s={28} $w={24}>≤</Formula><Formula $w={19}>k</Formula><Formula $up $s={28} $w={24}>≤</Formula><Formula $up $w={40}>100</Formula></ItemText></Item>
              <Item $mt={19}><Dot /><ItemText><Formula $w={14}>s</Formula><Run $w={39}>and</Run><Formula $w={13}>t</Formula><Run $w={406}>consist of lowercase English alphabetic letters,</Run><Formula $up $s={23} $w={87}>ascii[a-z]</Formula>.</ItemText></Item>
              <Head $mt={26}>Output Format</Head>
              <ClippedCode />
            </Body>
            <Aside>
              <Stats>
                <Easy>Easy</Easy>
                <StatText>Submitted 23539 times<br />Max Score <b>20</b></StatText>
              </Stats>
              <Need>Need Help?</Need>
              <HelpBox>
                <HelpRow $h={78} $pt={27}><Discuss /><HelpText>View Discussions</HelpText></HelpRow>
                <HelpRow $h={91} $pt={26}><Discuss /><HelpText>View Editorial Solution</HelpText></HelpRow>
                <HelpRow $h={90} $pt={26} $last><Trophy /><HelpText>View Top Submissions</HelpText></HelpRow>
              </HelpBox>
              <Rate>
                <RateTitle>RATE THIS CHALLENGE</RateTitle>
                <RateStars>{[1, 2, 3, 4, 5].map((n) => <StarOutline key={n} s={28} c="#738f93" w={2.2} />)}</RateStars>
              </Rate>
              <SideLink $mt={23}>Download problem statement</SideLink>
              <SideLink $mt={22}>Download sample test cases</SideLink>
              <SideLink $mt={25} $pl={6}>
                <svg width="24" height="20" viewBox="0 0 24 20"><path d="M0 18.500h18" stroke="#b7c9cc" strokeWidth="2" /><path d="M1 14.500v-3.500L11 1.500l3.500 3L4.500 14.500z" fill="none" stroke="#b7c9cc" strokeWidth="2" /></svg>
                Suggest Edits
              </SideLink>
              <Social>
                <SocialBox><FaFacebookF size={19} color="#fff" /></SocialBox>
                <SocialBox><FaTwitter size={16} color="#fff" /></SocialBox>
                <SocialBox><FaLinkedinIn size={17} color="#fff" /></SocialBox>
              </Social>
            </Aside>
          </Columns>
        </Page>
        <Scrollbar>
          <svg width="34" height="22" viewBox="0 0 34 22"><path d="M9 22l8-8 8 8z" fill="#505050" /></svg>
          <Thumb />
          <svg width="34" height="8" viewBox="0 0 34 8"><path d="M9 0l8 8 8-8z" fill="#505050" /></svg>
        </Scrollbar>
      </Viewport>

      <Taskbar>
        <StartSlot><svg width="32" height="32" viewBox="0 0 32 32"><path d="M0 4.500l13-2V15H0zM14.500 2.200L32 0v15H14.500zM0 16.500h13V29L0 27.500zM14.500 16.500H32V32l-17.500-2.300z" fill="#fff" /></svg></StartSlot>
        <StartSlot $mr={5}><svg width="32" height="33" viewBox="0 0 32 33"><circle cx="20.500" cy="11.500" r="10.500" fill="none" stroke="#fff" strokeWidth="2" /><path d="M13.500 19.500L.5 32" stroke="#fff" strokeWidth="2.200" /></svg></StartSlot>
        {tasks.map((t, i) => (
          <TaskSlot key={i} $bg={t.bg} $wide={t.wide}>
            {t.icon}
            {t.line && <TaskBarLine $c={t.line} />}
          </TaskSlot>
        ))}
        <Tray>
          <TrayIcon $w={61}><svg width="28" height="28" viewBox="0 0 28 28"><path d="M1 20.500L13.500 8 26 20.500" fill="none" stroke="#fff" strokeWidth="2" /></svg></TrayIcon>
          <TrayIcon><svg width="32" height="28" viewBox="0 0 32 28"><path d="M12 6.500h17.500V22H8" fill="none" stroke="#fff" strokeWidth="2" /><path d="M30 11h2v6h-2zM12 10h10v9H11z" fill="#fff" /><path d="M3.500 1v5M7.500 1v5M1 6h9v4q-1 3.500-4.500 3.500T1 10zM5.500 14v9" fill="none" stroke="#fff" strokeWidth="1.800" /></svg></TrayIcon>
          <TrayIcon><svg width="32" height="28" viewBox="0 0 32 28"><path d="M10 2h21v18H6M1 2h9v8H1zM5.500 10v16M17.500 20v5M11 25.500h14" fill="none" stroke="#fff" strokeWidth="2" /></svg></TrayIcon>
          <TrayIcon $w={68}><svg width="32" height="30" viewBox="0 0 32 30"><path d="M1 10h4l7-7v24l-7-7H1z" fill="none" stroke="#fff" strokeWidth="2" /><path d="M17 10q4 5 0 10M22 6q6 9 0 18M26.500 2q9 13 0 26" fill="none" stroke="#fff" strokeWidth="2" /></svg></TrayIcon>
          <Clock>4:09 PM</Clock>
          <Desk />
        </Tray>
      </Taskbar>
    </Screen>
  );
}
